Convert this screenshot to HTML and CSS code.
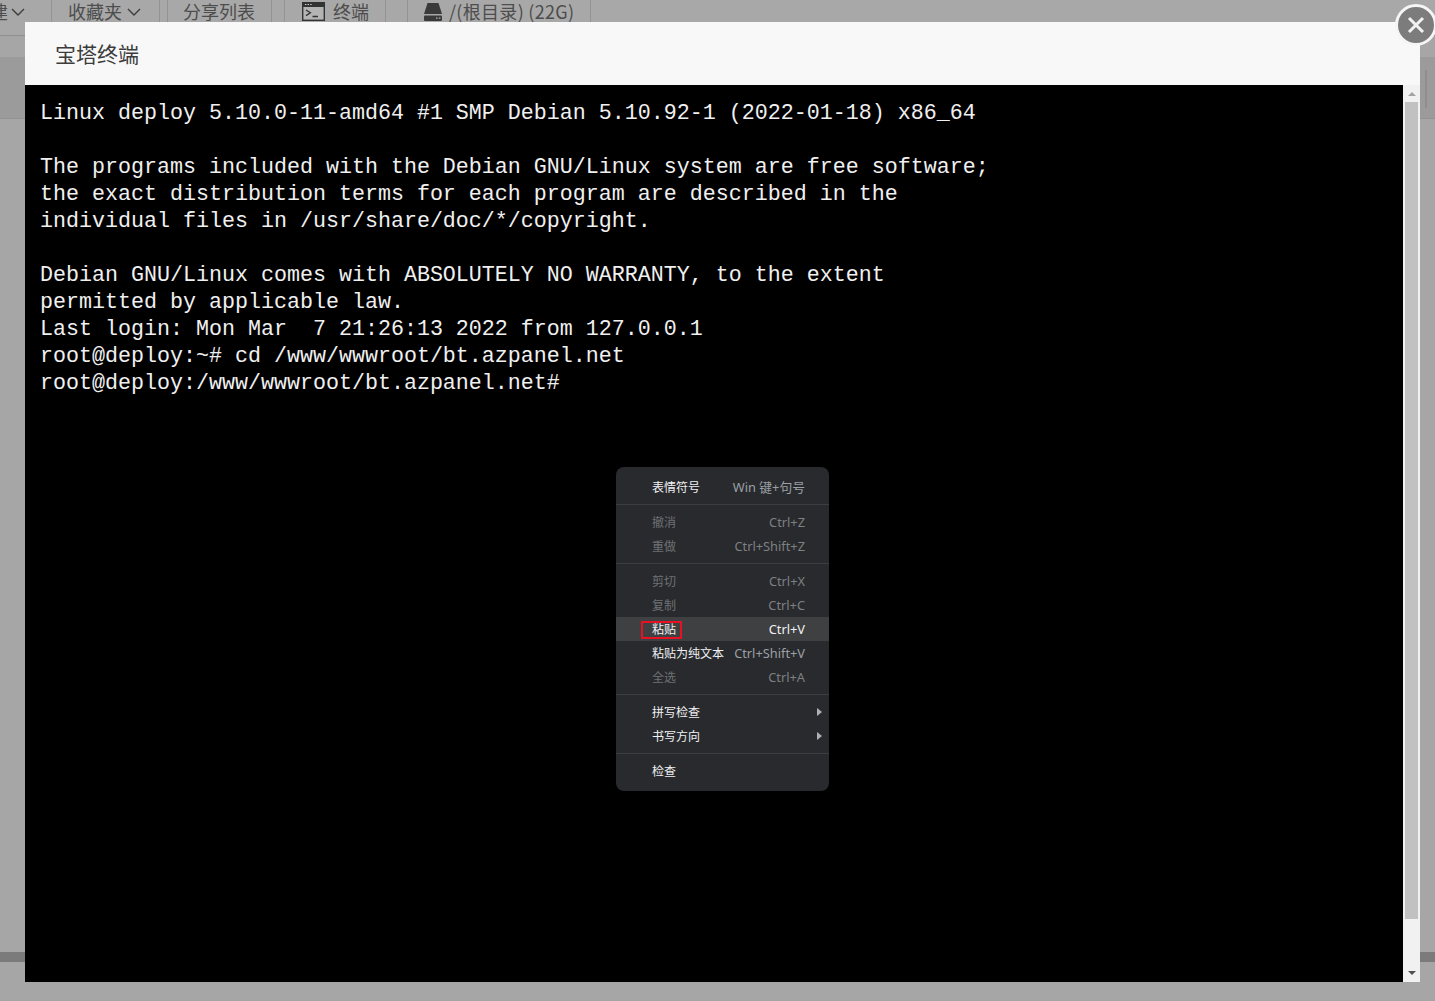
FILE: index.html
```html
<!DOCTYPE html>
<html lang="zh-CN">
<head>
<meta charset="utf-8">
<title>宝塔终端</title>
<link rel="stylesheet" href="styles.css">
</head>
<body>
<div class="page">
  <div class="toolbar">
    <div class="tool tool-first"><span class="tool-text">建</span><svg class="chev" viewBox="0 0 14 8"><path d="M1 1l6 6 6-6"/></svg></div>
    <div class="tool tool-fav"><span class="tool-text">收藏夹</span><svg class="chev" viewBox="0 0 14 8"><path d="M1 1l6 6 6-6"/></svg></div>
    <div class="tool tool-share"><span class="tool-text">分享列表</span></div>
    <div class="tool tool-term">
      <svg class="term-icon" viewBox="0 0 23 19"><rect x="0.7" y="0.7" width="21.6" height="17.6" fill="#b4b4b4" stroke="#333" stroke-width="1.4"/><rect x="0.7" y="0.7" width="21.6" height="4.3" fill="#333"/><path d="M3 2.5h1.4M5.6 2.5h1.4M8.2 2.5h1.4" stroke="#cfcfcf" stroke-width="1.2"/><path d="M4 8l4.4 2.8L4 13.6M10.5 14.5h5.5" fill="none" stroke="#333" stroke-width="1.3"/></svg>
      <span class="tool-text">终端</span>
    </div>
    <div class="tool tool-disk">
      <svg class="disk-icon" viewBox="0 0 20 18"><path d="M4.5 0h11l3.5 11H1z" fill="#3a3a3a"/><rect x="1" y="12.5" width="18" height="5.5" rx="1" fill="#3a3a3a"/><path d="M13 15.2h1.6M15.8 15.2h1.6" stroke="#b0b0b0" stroke-width="1.3"/></svg>
      <span class="tool-text">/(根目录) (22G)</span>
    </div>
  </div>
  <div class="bg-panel"><div class="bg-scroll"></div></div>
  <div class="bg-foot"></div>
</div>

<div class="modal">
  <div class="modal-title">宝塔终端</div>
  <div class="modal-body">
    <pre class="terminal">Linux deploy 5.10.0-11-amd64 #1 SMP Debian 5.10.92-1 (2022-01-18) x86_64

The programs included with the Debian GNU/Linux system are free software;
the exact distribution terms for each program are described in the
individual files in /usr/share/doc/*/copyright.

Debian GNU/Linux comes with ABSOLUTELY NO WARRANTY, to the extent
permitted by applicable law.
Last login: Mon Mar  7 21:26:13 2022 from 127.0.0.1
root@deploy:~# cd /www/wwwroot/bt.azpanel.net
root@deploy:/www/wwwroot/bt.azpanel.net#</pre>
    <div class="scrollbar">
      <div class="arrow arrow-up"></div>
      <div class="thumb"></div>
      <div class="arrow arrow-down"></div>
    </div>
  </div>
</div>

<div class="close-btn"><svg viewBox="0 0 20 20"><path d="M3 3l14 14M17 3L3 17"/></svg></div>

<div class="menu">
  <div class="menu-group">
    <div class="item"><span>表情符号</span><span class="key">Win 键+句号</span></div>
  </div>
  <div class="menu-group">
    <div class="item off"><span>撤消</span><span class="key">Ctrl+Z</span></div>
    <div class="item off"><span>重做</span><span class="key">Ctrl+Shift+Z</span></div>
  </div>
  <div class="menu-group">
    <div class="item off"><span>剪切</span><span class="key">Ctrl+X</span></div>
    <div class="item off"><span>复制</span><span class="key">Ctrl+C</span></div>
    <div class="item hover"><span class="boxed">粘贴</span><span class="key">Ctrl+V</span></div>
    <div class="item"><span>粘贴为纯文本</span><span class="key">Ctrl+Shift+V</span></div>
    <div class="item off"><span>全选</span><span class="key">Ctrl+A</span></div>
  </div>
  <div class="menu-group">
    <div class="item"><span>拼写检查</span><span class="sub"></span></div>
    <div class="item"><span>书写方向</span><span class="sub"></span></div>
  </div>
  <div class="menu-group">
    <div class="item"><span>检查</span></div>
  </div>
</div>
</body>
</html>
```
FILE: styles.css
```css
* { box-sizing: border-box; }
html, body { margin: 0; height: 100%; overflow: hidden; }
body {
  width: 1435px;
  height: 1001px;
  background: #a6a6a6;
  font-family: "Noto Sans CJK SC", "Liberation Sans", sans-serif;
  position: relative;
}
.page { display: flex; flex-direction: column; height: 1001px; }
.toolbar {
  height: 36px;
  display: flex;
  background: #a8a8a8;
  border-bottom: 1px solid #8f8f8f;
  color: #4d4d4d;
  font-size: 18px;
  flex: none;
  overflow: hidden;
}
.tool {
  height: 23px;
  display: flex;
  align-items: center;
  border-right: 1px solid #939393;
  line-height: 23px;
  flex: none;
  white-space: nowrap;
}
.tool-first { width: 62px; margin-left: -10px; gap: 3px; }
.tool-fav { width: 108px; padding-left: 16px; gap: 5px; }
.tool-share { margin-left: 7px; width: 105px; padding-left: 15px; border-left: 1px solid #939393; }
.tool-term { margin-left: 12px; width: 102px; padding-left: 17px; gap: 8px; border-left: 1px solid #939393; }
.tool-disk { margin-left: 21px; width: 184px; padding-left: 15px; gap: 6px; border-left: 1px solid #939393; letter-spacing: 0.3px; }
.chev { width: 14px; height: 8px; fill: none; stroke: #3c3c3c; stroke-width: 1.4; flex: none; }
.term-icon { width: 23px; height: 19px; flex: none; }
.disk-icon { width: 20px; height: 18px; flex: none; }
.bg-panel { height: 62px; background: #9b9b9b; flex: none; border-bottom: 1px solid #929292; margin-top: 21px; position: relative; }
.bg-scroll { position: absolute; left: 1425px; top: 13px; width: 2px; height: 38px; background: #8e8e8e; }
.bg-foot { height: 10px; background: #7b7b7b; flex: none; margin-top: 833px; }

.modal {
  position: absolute;
  left: 25px;
  top: 22px;
  width: 1395px;
  height: 960px;
  background: #fff;
  display: flex;
  flex-direction: column;
}
.modal-title {
  height: 63px;
  flex: none;
  background: #f8f8f8;
  padding-left: 30px;
  line-height: 63px;
  font-size: 21px;
  color: #3c3c3c;
}
.modal-body { flex: 1; display: flex; min-height: 0; background: #000; }
.terminal {
  flex: 1;
  margin: 0;
  padding: 15px 0 0 15px;
  font-family: "Liberation Mono", monospace;
  font-size: 21.67px;
  line-height: 27px;
  color: #f0f0f0;
  background: #000;
}
.scrollbar {
  width: 17px;
  flex: none;
  background: #f1f1f1;
  display: flex;
  flex-direction: column;
  align-items: center;
}
.arrow { width: 0; height: 0; flex: none; border-left: 4px solid transparent; border-right: 4px solid transparent; }
.arrow-up { margin-top: 7px; margin-bottom: 6px; border-bottom: 4px solid #a3a3a3; }
.thumb { width: 13px; height: 817px; background: #c1c1c1; flex: none; }
.arrow-down { margin-top: 52px; border-top: 4px solid #505050; }

.close-btn {
  position: absolute;
  left: 1395px;
  top: 4px;
  width: 42px;
  height: 42px;
  border-radius: 50%;
  background: #7c7c7c;
  border: 3px solid #f5f5f5;
  display: flex;
  align-items: center;
  justify-content: center;
}
.close-btn svg { width: 20px; height: 20px; fill: none; stroke: #f2f2f2; stroke-width: 3; }

.menu {
  position: absolute;
  left: 616px;
  top: 467px;
  width: 213px;
  height: 324px;
  background: #292a2d;
  border-radius: 8px;
  padding-top: 8px;
  color: #f0f1f3;
  font-size: 12px;
}
.menu-group { padding-bottom: 5px; margin-bottom: 5px; border-bottom: 1px solid #3c3d40; }
.menu-group:last-child { border-bottom: 0; margin-bottom: 0; }
.item {
  height: 24px;
  display: flex;
  justify-content: space-between;
  align-items: center;
  padding: 0 24px 0 36px;
  position: relative;
  line-height: 24px;
  white-space: nowrap;
}
.key { color: #9aa0a6; font-family: "Noto Sans", "Noto Sans CJK SC", sans-serif; font-size: 12.8px; }
.off { color: #6e7175; }
.off .key { color: #7d8084; }
.hover { background: #3f4042; }
.hover .key { color: #f0f1f3; }
.boxed { position: relative; }
.boxed::after {
  content: "";
  box-sizing: border-box;
  position: absolute;
  left: -11px;
  top: 4px;
  width: 41px;
  height: 18px;
  border: 2px solid #e81123;
}
.sub {
  position: absolute;
  right: 7px;
  top: 8px;
  width: 0;
  height: 0;
  border-top: 4px solid transparent;
  border-bottom: 4px solid transparent;
  border-left: 5px solid #aeb0b3;
}
```
